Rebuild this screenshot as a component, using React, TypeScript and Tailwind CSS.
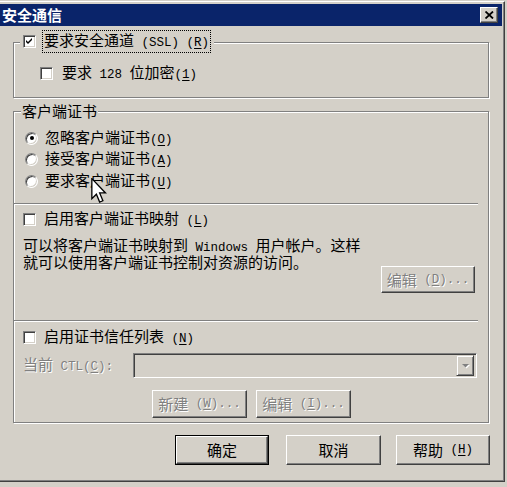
import React from 'react'

const L = ({ children }: { children: React.ReactNode }) => (
  <span className="font-['Liberation_Mono',monospace] text-[12.5px] whitespace-pre">{children}</span>
)

const Key = ({ k }: { k: string }) => (
  <L>
    (<span className="underline underline-offset-2">{k}</span>)
  </L>
)

const Check = ({ checked = false }: { checked?: boolean }) => (
  <span className="relative inline-block w-[13px] h-[13px] shrink-0 bg-white border border-t-[#808080] border-l-[#808080] border-b-white border-r-white shadow-[inset_1px_1px_0_#404040,inset_-1px_-1px_0_#d4d0c8]">
    {checked && (
      <svg className="absolute left-[2px] top-[2px]" width="7" height="7" viewBox="0 0 7 7">
        <path d="M0 2 L2 4 L6 0 L6 2 L2 6 L0 4 Z" fill="#000" />
      </svg>
    )}
  </span>
)

const Radio = ({ checked = false }: { checked?: boolean }) => (
  <span className="relative inline-flex items-center justify-center w-[13px] h-[13px] shrink-0 rounded-full bg-white border border-t-[#808080] border-l-[#808080] border-b-white border-r-white shadow-[inset_1px_1px_0_#404040,inset_-1px_-1px_0_#d4d0c8]">
    {checked && <span className="w-[4px] h-[4px] rounded-full bg-black" />}
  </span>
)

const Btn = ({ children, w, h, disabled = false, def = false }: { children: React.ReactNode; w: string; h: string; disabled?: boolean; def?: boolean }) => (
  <div className={`${w} ${h} shrink-0 ${def ? 'border border-black' : ''}`}>
    <div
      className={`w-full h-full flex items-center justify-center border border-t-white border-l-white border-b-[#404040] border-r-[#404040] shadow-[inset_-1px_-1px_0_#808080] ${
        disabled ? 'text-[#808080] [text-shadow:1px_1px_0_#fff]' : 'text-black'
      }`}
    >
      {children}
    </div>
  </div>
)

const Sep = () => <div className="w-[464px] h-[2px] border-t border-t-[#808080] border-b border-b-white" />

export default function App() {
  return (
    <div className="relative w-[507px] h-[487px] bg-[#d4d0c8] overflow-hidden pt-[1px] font-['Noto_Sans_CJK_SC',sans-serif] text-[15px] leading-[18px] text-black">
      {/* window */}
      <div className="w-[505px] h-[481px] border-t border-t-white border-r border-r-[#404040] border-b border-b-[#404040] shadow-[inset_-1px_-1px_0_#808080] pt-[2px]">
        {/* title bar */}
        <div className="w-[502px] h-[22px] bg-[#0a246a] flex items-center justify-between pl-[2px] pr-[4px]">
          <span className="text-white font-bold">安全通信</span>
          <div className="w-[18px] h-[16px] flex items-center justify-center bg-[#d4d0c8] border border-t-white border-l-white border-b-[#404040] border-r-[#404040] shadow-[inset_-1px_-1px_0_#808080]">
            <svg width="9" height="8" viewBox="0 0 9 8">
              <path d="M0.5 0.5 L8 7.5 M8 0.5 L0.5 7.5" stroke="#000" strokeWidth="1.8" />
            </svg>
          </div>
        </div>

        <div className="pl-[13px] flex flex-col">
          {/* group 1 */}
          <div className="relative mt-[16px] w-[476px] h-[56px] border border-[#808080] shadow-[inset_1px_1px_0_#fff,1px_1px_0_#fff] pt-[23px] pl-[26px]">
            <div className="absolute left-[6px] top-[-11px] h-[18px] flex items-center bg-[#d4d0c8] pl-[3px] pr-[4px]">
              <Check checked />
              <span className="ml-[7px] px-[1px] outline outline-1 outline-dotted outline-black">
                要求安全通道<L>{' (SSL) '}</L><Key k="R" />
              </span>
            </div>
            <div className="flex items-center h-[15px]">
              <Check />
              <span className="ml-[9px]">
                要求<L>{' 128 '}</L>位加密<Key k="1" />
              </span>
            </div>
          </div>

          {/* group 2 */}
          <div className="relative mt-[13px] w-[476px] h-[312px] border border-[#808080] shadow-[inset_1px_1px_0_#fff,1px_1px_0_#fff]">
            <div className="absolute left-[7px] top-[-10px] h-[18px] flex items-center bg-[#d4d0c8] px-[1px]">客户端证书</div>

            <div className="mt-[15px] pl-[11px] flex flex-col">
              <div className="h-[22px] flex items-center gap-[7px]">
                <Radio checked />
                <span>忽略客户端证书<Key k="O" /></span>
              </div>
              <div className="h-[21px] flex items-center gap-[7px]">
                <Radio />
                <span>接受客户端证书<Key k="A" /></span>
              </div>
              <div className="h-[22px] flex items-center gap-[7px]">
                <Radio />
                <span>要求客户端证书<Key k="U" /></span>
              </div>
            </div>

            <div className="mt-[11px]">
              <Sep />
            </div>

            <div className="mt-[5px] pl-[9px] h-[18px] flex items-center gap-[8px]">
              <Check />
              <span>启用客户端证书映射<L>{' '}</L><Key k="L" /></span>
            </div>

            <div className="mt-[10px] pl-[9px] flex flex-col w-[461px]">
              <p className="leading-[14px]">
                可以将客户端证书映射到<L>{' Windows '}</L>用户帐户。这样
                <br />
                就可以使用客户端证书控制对资源的访问。
              </p>
              <div className="self-end mt-[-3px]">
                <Btn w="w-[94px]" h="h-[27px]" disabled>
                  编辑<L>{' '}</L><Key k="D" /><L>...</L>
                </Btn>
              </div>
            </div>

            <div className="mt-[27px]">
              <Sep />
            </div>

            <div className="mt-[6px] pl-[9px] h-[18px] flex items-center gap-[8px]">
              <Check />
              <span>启用证书信任列表<L>{' '}</L><Key k="N" /></span>
            </div>

            <div className="mt-[7px] pl-[9px] flex items-center">
              <span className="w-[110px] text-[#808080] [text-shadow:1px_1px_0_#fff]">
                当前<L>{' CTL'}</L><Key k="C" /><L>:</L>
              </span>
              <div className="w-[344px] h-[25px] flex items-center justify-end pr-[2px] border border-t-[#808080] border-l-[#808080] border-b-white border-r-white shadow-[inset_1px_1px_0_#404040,inset_-1px_-1px_0_#d4d0c8]">
                <div className="w-[18px] h-[21px] flex items-center justify-center border border-t-[#d4d0c8] border-l-[#d4d0c8] border-b-[#404040] border-r-[#404040] shadow-[inset_1px_1px_0_#fff,inset_-1px_-1px_0_#808080]">
                  <svg width="9" height="6" viewBox="0 0 9 6">
                    <path d="M2 2 L9 2 L5.5 5.5 Z" fill="#fff" />
                    <path d="M1 1 L8 1 L4.5 4.5 Z" fill="#808080" />
                  </svg>
                </div>
              </div>
            </div>

            <div className="mt-[12px] pl-[138px] flex gap-[9px]">
              <Btn w="w-[95px]" h="h-[28px]" disabled>
                新建<L>{' '}</L><Key k="W" /><L>...</L>
              </Btn>
              <Btn w="w-[95px]" h="h-[28px]" disabled>
                编辑<L>{' '}</L><Key k="I" /><L>...</L>
              </Btn>
            </div>
          </div>

          {/* bottom buttons */}
          <div className="mt-[12px] pl-[162px] flex">
            <Btn w="w-[94px]" h="h-[30px]" def>
              确定
            </Btn>
            <div className="ml-[17px]">
              <Btn w="w-[95px]" h="h-[30px]">取消</Btn>
            </div>
            <div className="ml-[15px]">
              <Btn w="w-[94px]" h="h-[30px]">
                帮助<L>{' '}</L><Key k="H" />
              </Btn>
            </div>
          </div>
        </div>
      </div>

      {/* mouse cursor */}
      <svg className="absolute left-[91px] top-[178px]" width="16" height="26" viewBox="0 0 12 20">
        <path d="M0.5 0.5 L0.5 16 L4 12.5 L6.5 18.5 L9 17.5 L6.5 11.5 L11 11.5 Z" fill="#fff" stroke="#000" strokeWidth="1" strokeLinejoin="miter" />
      </svg>
    </div>
  )
}
